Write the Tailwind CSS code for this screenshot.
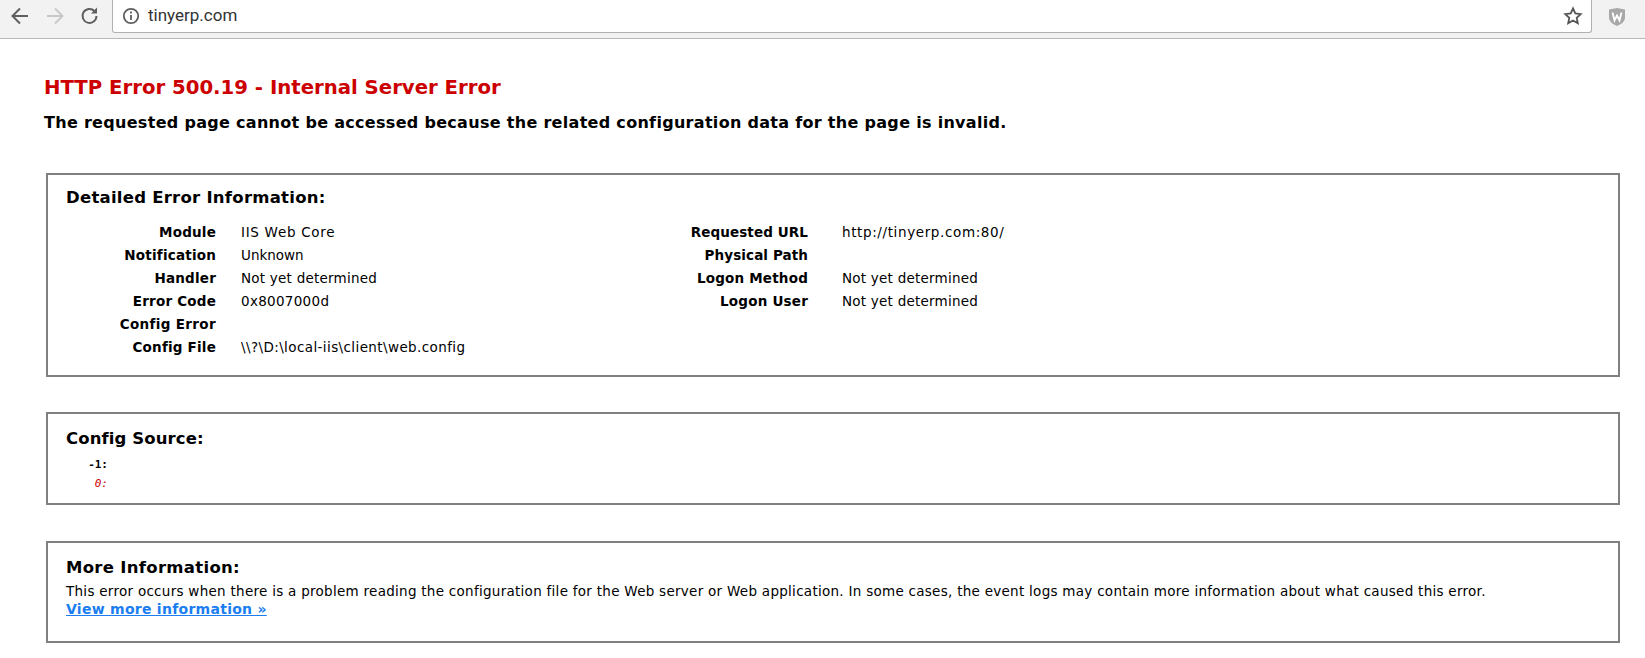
<!DOCTYPE html>
<html lang="en">
  <head>
    <meta name="viewport" content="width=device-width, initial-scale=1.0" />
    <meta charset="UTF-8" />
    <title>HTTP Error 500.19 - Internal Server Error</title>
    <script src="https://cdn.jsdelivr.net/npm/@tailwindcss/browser@4"></script>
  </head>
  <body class="bg-white text-black font-['DejaVu_Sans',sans-serif] h-[658px] overflow-hidden">
    <!-- browser toolbar -->
    <div class="h-[39px] bg-[#f2f2f2] border-b border-[#b8b8b8] flex">
      <div class="w-[112px] h-[32px] flex items-center pl-[9px] gap-[13px] shrink-0">
        <svg class="w-[22px] h-[22px]" viewBox="0 0 22 22" fill="none" stroke="#5f5f5f" stroke-width="2"><path d="M19 11H4M11 3.500L3.500 11l7.500 7.500"/></svg>
        <svg class="w-[22px] h-[22px]" viewBox="0 0 22 22" fill="none" stroke="#c8c8c8" stroke-width="2"><path d="M3 11h15M11 3.500l7.500 7.500-7.500 7.500"/></svg>
        <svg class="w-[22px] h-[22px]" viewBox="0 0 22 22" fill="none" stroke="#5f5f5f" stroke-width="2"><path d="M17.500 11a7 7 0 1 1-2-5"/><path d="M18 2.500v6h-6" fill="#5f5f5f" stroke="none"/></svg>
      </div>
      <div class="w-[1480px] h-[33px] bg-white border-l border-r border-b border-[#b0b0b0] rounded-b-[3px] flex items-center pl-[9px] pr-[8px] shrink-0">
        <svg class="w-[18px] h-[18px]" viewBox="0 0 18 18" fill="none" stroke="#5f5f5f" stroke-width="1.800"><circle cx="9" cy="9" r="7.200"/><path d="M9 8v5M9 4.500v2"/></svg>
        <span class="ml-[8px] text-[17px] text-[#333] font-['Roboto',sans-serif]">tinyerp.com</span>
        <svg class="ml-auto w-[20px] h-[20px]" viewBox="0 0 20 20" fill="none" stroke="#555" stroke-width="1.800"><path d="M10 2.500l2.300 5 5.400.6-4 3.700 1.100 5.400L10 14.500l-4.800 2.700 1.100-5.400-4-3.700 5.400-.6z"/></svg>
      </div>
      <div class="flex-1 flex justify-center pt-[7px] pr-[4px]">
        <svg class="w-[18px] h-[20px]" viewBox="0 0 18 20"><path d="M1 2.500 9 1l8 1.500v8c0 4-4 7-8 8.500-4-1.500-8-4.500-8-8.500z" fill="#a8a8a8"/><path d="M4.500 5.500l2 8 2.500-5 2.500 5 2-8" fill="none" stroke="#fff" stroke-width="1.800"/></svg>
      </div>
    </div>

    <main class="pl-[44px] pr-[25px]">
      <h1 class="mt-[37px] text-[19.700px] leading-[24px] font-bold text-[#cc0000]">HTTP Error 500.19 - Internal Server Error</h1>
      <h2 class="mt-[13px] text-[16px] tracking-[0.3px] leading-[20px] font-bold">The requested page cannot be accessed because the related configuration data for the page is invalid.</h2>

      <!-- detailed error -->
      <section class="mt-[40px] ml-[2px] h-[204px] border-2 border-[#808080] pl-[18px] pt-[13px]">
        <h3 class="text-[16.500px] tracking-[0.25px] leading-[20px] font-bold">Detailed Error Information:</h3>
        <div class="mt-[13px] flex text-[13.500px] leading-[23px]">
          <dl class="w-[622px] grid grid-cols-[150px_1fr] gap-x-[25px]">
            <dt class="font-bold text-right tracking-[0.2px]">Module</dt><dd class="tracking-[0.7px]">IIS Web Core</dd>
            <dt class="font-bold text-right tracking-[0.2px]">Notification</dt><dd>Unknown</dd>
            <dt class="font-bold text-right tracking-[0.2px]">Handler</dt><dd class="tracking-[0.23px]">Not yet determined</dd>
            <dt class="font-bold text-right tracking-[0.2px]">Error Code</dt><dd class="tracking-[0.3px]">0x8007000d</dd>
            <dt class="font-bold text-right tracking-[0.35px]">Config Error</dt><dd></dd>
            <dt class="font-bold text-right tracking-[0.2px]">Config File</dt><dd class="tracking-[0.4px]">\\?\D:\local-iis\client\web.config</dd>
          </dl>
          <dl class="h-[92px] grid grid-cols-[120px_1fr] gap-x-[34px]">
            <dt class="font-bold text-right tracking-[0.1px]">Requested URL</dt><dd class="tracking-[0.62px]">http://tinyerp.com:80/</dd>
            <dt class="font-bold text-right tracking-[0.1px]">Physical Path</dt><dd></dd>
            <dt class="font-bold text-right tracking-[0.2px]">Logon Method</dt><dd class="tracking-[0.23px]">Not yet determined</dd>
            <dt class="font-bold text-right tracking-[0.2px]">Logon User</dt><dd class="tracking-[0.23px]">Not yet determined</dd>
          </dl>
        </div>
      </section>

      <!-- config source -->
      <section class="mt-[35px] ml-[2px] h-[93px] border-2 border-[#808080] pl-[18px] pt-[15px]">
        <h3 class="text-[16.500px] tracking-[0.1px] leading-[20px] font-bold">Config Source:</h3>
        <pre class="mt-[6px] w-[42px] text-right font-['DejaVu_Sans_Mono',monospace] text-[11px] leading-[19px]"><span class="block font-bold">-1:</span><span class="block italic text-[#cc0000]">0:</span></pre>
      </section>

      <!-- more information -->
      <section class="mt-[36px] ml-[2px] h-[102px] border-2 border-[#808080] pl-[18px] pt-[15px]">
        <h3 class="text-[16.500px] tracking-[0.3px] leading-[20px] font-bold">More Information:</h3>
        <p class="mt-[5px] text-[13.500px] tracking-[0.276px] leading-[17px] whitespace-nowrap">This error occurs when there is a problem reading the configuration file for the Web server or Web application. In some cases, the event logs may contain more information about what caused this error.</p>
        <a href="#" class="block text-[14px] tracking-[0.27px] leading-[18px] font-bold text-[#1a7df0] underline">View more information »</a>
      </section>
    </main>
  </body>
</html>
